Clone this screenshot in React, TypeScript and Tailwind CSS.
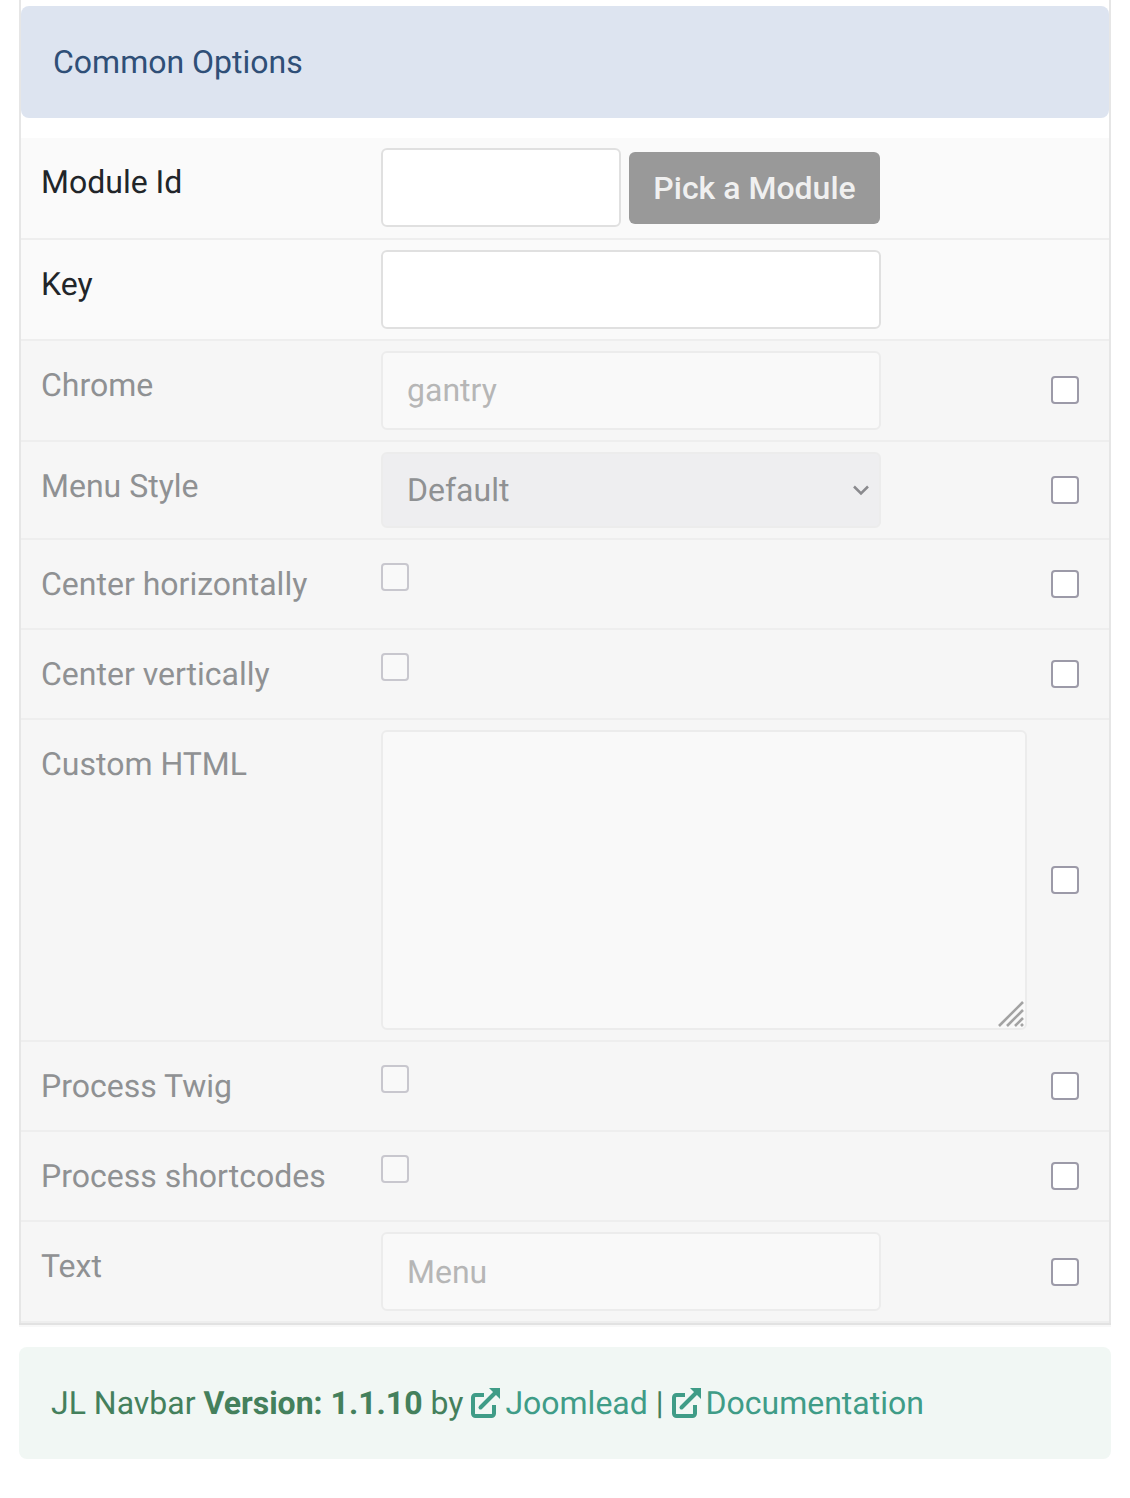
type RowProps = {
  label: string;
  muted?: boolean;
  override?: boolean;
  height: string;
  checkClass?: string;
  children: React.ReactNode;
};

function Row({ label, muted = true, override = true, height, checkClass = '', children }: RowProps) {
  return (
    <div className={`flex border-b-2 border-[#eeeeee] ${height} ${muted ? 'bg-[#f6f6f6]' : 'bg-[#fafafa]'}`}>
      <label className={`w-[360px] shrink-0 pl-[20px] pt-[20px] text-[32px] leading-[48px] ${muted ? 'text-[#8f9193]' : 'text-[#212529]'}`}>
        {label}
      </label>
      <div className="min-w-0 flex-1 pt-[10px]">{children}</div>
      {override && (
        <div className={`flex w-[88px] shrink-0 items-center pl-[30px] ${checkClass}`}>
          <input type="checkbox" className="h-[28px] w-[28px] appearance-none rounded-[4px] border-2 border-[#9c9aa8] bg-white" />
        </div>
      )}
    </div>
  );
}

function DisabledCheck() {
  return <input type="checkbox" disabled className="mt-[13px] block h-[28px] w-[28px] appearance-none rounded-[4px] border-2 border-[#c8c7ce] bg-[#f9f9f9]" />;
}

function ExternalIcon() {
  return (
    <svg className="ml-[-1px] mr-[5px] inline-block h-[30px] w-[30px] align-[-4px]" viewBox="0 0 30 30" fill="none">
      <path d="M14 7H5.5A2.5 2.5 0 0 0 3 9.5v16A2.5 2.5 0 0 0 5.5 28h16a2.5 2.5 0 0 0 2.5-2.5V17" stroke="currentColor" strokeWidth="4" />
      <path d="M10.5 19.5L25 5" stroke="currentColor" strokeWidth="4" strokeLinecap="round" />
      <path d="M19 0h11v11z" fill="currentColor" />
    </svg>
  );
}

export default function App() {
  return (
    <div className="h-[1498px] bg-white font-['Roboto',sans-serif] [text-rendering:geometricPrecision]">
      <div className="px-[19px]">
        <div className="border-x-2 border-[#e6e6e6] pt-[6px]">
          <div className="flex h-[112px] items-center rounded-[8px] bg-[#dde4f0] pl-[32px] text-[32px] text-[#2f4f77]">
            Common Options
          </div>
          <div className="mt-[20px]">
            <Row label="Module Id" muted={false} override={false} height="h-[102px]">
              <div className="flex items-start gap-[8px]">
                <input className="h-[79px] w-[240px] rounded-[6px] border-2 border-[#e0e0e0] bg-white" />
                <button className="mt-[4px] h-[72px] w-[251px] rounded-[6px] bg-[#999999] text-[32px] font-medium text-[#f0f0f0]">
                  Pick a Module
                </button>
              </div>
            </Row>
            <Row label="Key" muted={false} override={false} height="h-[101px]">
              <input className="h-[79px] w-[500px] rounded-[6px] border-2 border-[#e0e0e0] bg-white" />
            </Row>
            <Row label="Chrome" height="h-[101px]" checkClass="pb-[1px]">
              <div className="flex h-[79px] w-[500px] items-center rounded-[6px] border-2 border-[#ececec] bg-[#f9f9f9] pb-[2px] pl-[24px] text-[32px] text-[#b6b6b6]">
                gantry
              </div>
            </Row>
            <Row label="Menu Style" height="h-[98px]">
              <div className="flex h-[76px] w-[500px] items-center justify-between rounded-[6px] border-2 border-[#ececec] bg-[#eeeef0] pl-[24px] pr-[9px] text-[32px] text-[#8f9193]">
                Default
                <svg width="18" height="12" viewBox="0 0 18 12" fill="none" stroke="#8a8a8e" strokeWidth="2.5">
                  <path d="M2 2.5l7 7 7-7" />
                </svg>
              </div>
            </Row>
            <Row label="Center horizontally" height="h-[90px]">
              <DisabledCheck />
            </Row>
            <Row label="Center vertically" height="h-[90px]">
              <DisabledCheck />
            </Row>
            <Row label="Custom HTML" height="h-[322px]">
              <div className="relative h-[300px] w-[646px] rounded-[6px] border-2 border-[#ececec] bg-[#f9f9f9]">
                <svg className="absolute bottom-[1px] right-[1px]" width="26" height="26" viewBox="0 0 26 26" stroke="#a3a3a3" strokeWidth="2.6">
                  <path d="M1 25L25 1M9 25L25 9M17 25L25 17M23 25L25 23" />
                </svg>
              </div>
            </Row>
            <Row label="Process Twig" height="h-[90px]">
              <DisabledCheck />
            </Row>
            <Row label="Process shortcodes" height="h-[90px]">
              <DisabledCheck />
            </Row>
            <Row label="Text" height="h-[101px]">
              <div className="flex h-[79px] w-[500px] items-center rounded-[6px] border-2 border-[#ececec] bg-[#f9f9f9] pl-[24px] text-[32px] text-[#b6b6b6]">
                Menu
              </div>
            </Row>
          </div>
        </div>
        <div className="h-[2px] bg-[#e2e2e2]" />
        <div className="h-[2px] bg-[#f8f8f8]" />
        <div className="mt-[20px] flex h-[112px] items-center rounded-[8px] bg-[#f1f7f4] pl-[32px] text-[32px] text-[#44805c]">
          <span>
            JL Navbar <b>Version: 1.1.10</b> by{' '}
            <span className="text-[#3f9c87]">
              <ExternalIcon />
              Joomlead
            </span>{' '}
            |{' '}
            <span className="text-[#3f9c87]">
              <ExternalIcon />
              Documentation
            </span>
          </span>
        </div>
      </div>
    </div>
  );
}
